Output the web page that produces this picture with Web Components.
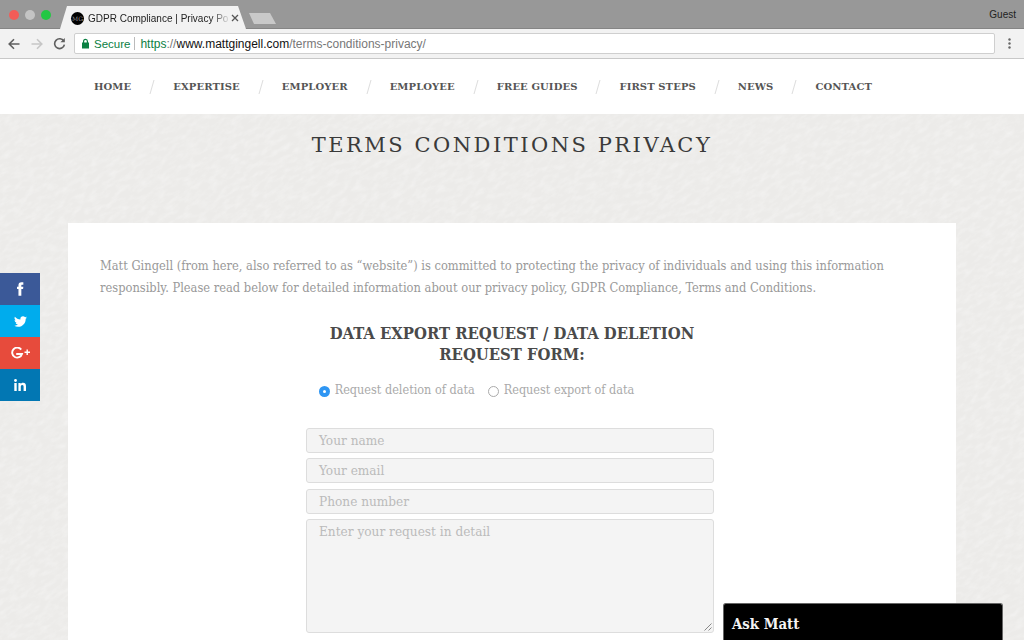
<!DOCTYPE html>
<html>
<head>
<meta charset="utf-8">
<title>GDPR Compliance | Privacy Policy</title>
<style>
  html, body { margin: 0; height: 640px; overflow: hidden; }
  body { font-family: "DejaVu Serif", serif; }
</style>
</head>
<body>
<browser-chrome></browser-chrome>
<site-nav></site-nav>
<site-page>
  <page-title>TERMS CONDITIONS PRIVACY</page-title>
  <page-card>
    <p>Matt Gingell (from here, also referred to as “website”) is committed to protecting the privacy of individuals and using this information responsibly. Please read below for detailed information about our privacy policy, GDPR Compliance, Terms and Conditions.</p>
    <request-form></request-form>
  </page-card>
  <social-bar slot="over"></social-bar>
  <ask-matt slot="over"></ask-matt>
</site-page>

<script>
// top of the window: tabs and address bar
class BrowserChrome extends HTMLElement{
  constructor(){
    super();
    this.attachShadow({mode: "open"});
  }
  connectedCallback(){
    this.shadowRoot.innerHTML = `
    <style>
      :host{
        display: block;
        font-family: "Liberation Sans", Arial, sans-serif;
      }
      .tabs{
        display: flex;
        align-items: flex-end;
        box-sizing: border-box;
        height: 29px;
        background: #989898;
        padding-left: 9px;
        border-bottom: 1px solid #858585;
      }
      .lights{
        display: flex;
        gap: 6px;
        align-self: flex-start;
        margin-top: 10px;
        width: 51px;
      }
      .lights i{
        width: 10px;
        height: 10px;
        border-radius: 50%;
      }
      .tab{
        display: flex;
        align-items: center;
        box-sizing: border-box;
        width: 186px;
        height: 23px;
        margin-bottom: -1px;
        padding: 1px 3px 0 11px;
        background: #f2f2f2;
        clip-path: polygon(0 100%, 7px 0, 178px 0, 100% 100%);
        font-size: 10px;
        color: #222;
        white-space: nowrap;
      }
      .fav{
        flex: none;
        display: grid;
        place-items: center;
        width: 13px;
        height: 13px;
        margin-right: 4px;
        border-radius: 50%;
        background: #000;
        color: #999;
        font: 6px "DejaVu Serif", serif;
      }
      .tab span.t{
        flex: 1;
        -webkit-mask-image: linear-gradient(to right, #000 86%, transparent 100%);
      }
      .tab svg{ flex: none; margin-right: 4px; }
      .newtab{
        width: 27px;
        height: 11px;
        margin: 0 0 4px 3px;
        background: #c9c9c9;
        clip-path: polygon(0 0, 21px 0, 100% 100%, 5px 100%);
      }
      .guest{
        margin-left: auto;
        align-self: center;
        padding: 0 8px 0 0;
        font-size: 10px;
        color: #222;
      }
      .bar{
        display: flex;
        align-items: center;
        box-sizing: border-box;
        height: 30px;
        padding-left: 8px;
        background: #f2f2f2;
        border-bottom: 1px solid #c8c8c8;
      }
      .bar > svg{ flex: none; }
      .omni{
        flex: 1;
        display: flex;
        align-items: center;
        box-sizing: border-box;
        height: 21px;
        margin: 0 13px 0 8px;
        padding-left: 6px;
        background: #fff;
        border: 1px solid #cfcfcf;
        border-radius: 2px;
        font-size: 12px;
        color: #777;
        white-space: nowrap;
      }
      .secure{ color: #0b8043; margin-left: 4px; font-size: 11.5px; }
      .sep{ width: 1px; height: 13px; background: #bbb; margin: 0 5px 0 4px; }
      .https{ color: #0b8043; }
      .host{ color: #111; }
      .dots{ margin-right: 13px; }
    </style>
    <div class="tabs">
      <div class="lights">
        <i style="background:#f25c58"></i><i style="background:#c4c4c4"></i><i style="background:#24c744"></i>
      </div>
      <div class="tab">
        <span class="fav">MG</span>
        <span class="t">GDPR Compliance | Privacy Po</span>
        <svg width="8" height="8" viewBox="0 0 8 8"><path d="M1 1l6 6M7 1L1 7" stroke="#555" stroke-width="1.3"/></svg>
      </div>
      <div class="newtab"></div>
      <div class="guest">Guest</div>
    </div>
    <div class="bar">
      <svg width="12" height="12" viewBox="0 0 12 12"><path d="M11.5 6H1.5M6 1.2L1.2 6 6 10.8" fill="none" stroke="#5f5f5f" stroke-width="1.6"/></svg>
      <svg style="margin-left:11px" width="12" height="12" viewBox="0 0 12 12"><path d="M.5 6h10M6 1.2L10.8 6 6 10.8" fill="none" stroke="#c6c6c6" stroke-width="1.6"/></svg>
      <svg style="margin-left:10px" width="13" height="13" viewBox="0 0 13 13"><path d="M10.8 4.2A4.9 4.9 0 1 0 11.4 7.6" fill="none" stroke="#5f5f5f" stroke-width="1.6"/><path d="M11.8 .9v4.4H7.4z" fill="#5f5f5f"/></svg>
      <div class="omni">
        <svg width="9" height="11" viewBox="0 0 9 11"><rect x="1" y="4.5" width="7" height="6" fill="#0b8043"/><path d="M2.6 5V3.2a1.9 1.9 0 0 1 3.8 0V5" fill="none" stroke="#0b8043" stroke-width="1.2"/></svg>
        <span class="secure">Secure</span>
        <span class="sep"></span>
        <span class="https">https</span>://<span class="host">www.mattgingell.com</span>/terms-conditions-privacy/
      </div>
      <svg class="dots" width="3" height="11" viewBox="0 0 3 11"><circle cx="1.5" cy="1.5" r="1.2" fill="#666"/><circle cx="1.5" cy="5.5" r="1.2" fill="#666"/><circle cx="1.5" cy="9.5" r="1.2" fill="#666"/></svg>
    </div>
    `;
  }
}
customElements.define("browser-chrome", BrowserChrome);

// white menu bar with slashes between the items
class SiteNav extends HTMLElement{
  constructor(){
    super();
    this.attachShadow({mode: "open"});
  }
  connectedCallback(){
    const items = ["HOME","EXPERTISE","EMPLOYER","EMPLOYEE","FREE GUIDES","FIRST STEPS","NEWS","CONTACT"];
    this.shadowRoot.innerHTML = `
    <style>
      :host{
        display: flex;
        align-items: center;
        box-sizing: border-box;
        height: 55px;
        padding: 0 0 0 94px;
        background: #fff;
      }
      a{
        font: bold 10px "DejaVu Serif", serif;
        letter-spacing: .1px;
        color: #555;
        white-space: nowrap;
      }
      svg{ margin: 0 18px; flex: none; }
    </style>
    ${items.map(i => `<a>${i}</a>`).join(`<svg width="6" height="16" viewBox="0 0 6 16"><path d="M5 1L1 15" stroke="#ddd"/></svg>`)}
    `;
  }
}
customElements.define("site-nav", SiteNav);

// textured area under the menu
class SitePage extends HTMLElement{
  constructor(){
    super();
    this.attachShadow({mode: "open"});
  }
  connectedCallback(){
    this.shadowRoot.innerHTML = `
    <style>
      :host{
        display: block;
        position: relative;
        height: 526px;
        overflow: hidden;
        background: #ecebe9;
      }
      .grain{
        position: absolute;
        inset: 0;
        width: 100%;
        height: 100%;
        opacity: .55;
      }
      .flow{
        position: relative;
        display: flex;
        flex-direction: column;
        align-items: center;
      }
    </style>
    <svg class="grain">
      <filter id="paper" x="0" y="0" width="100%" height="100%">
        <feTurbulence type="fractalNoise" baseFrequency="0.1 0.22" numOctaves="3" seed="7"/>
        <feColorMatrix values="0 0 0 0 1  0 0 0 0 1  0 0 0 0 1  1.2 0 0 0 -0.48"/>
      </filter>
      <rect x="-400" y="-600" width="1900" height="1700" filter="url(#paper)" transform="rotate(-32)"/>
    </svg>
    <div class="flow"><slot></slot></div>
    <slot name="over"></slot>
    `;
  }
}
customElements.define("site-page", SitePage);

class PageTitle extends HTMLElement{
  constructor(){
    super();
    this.attachShadow({mode: "open"}).innerHTML = `
    <style>
      :host{
        display: block;
        box-sizing: border-box;
        height: 109px;
        padding-top: 17px;
        font: 21px/28px "DejaVu Serif", serif;
        letter-spacing: 2.5px;
        color: #3a3a3a;
        text-align: center;
      }
    </style>
    <slot></slot>
    `;
  }
}
customElements.define("page-title", PageTitle);

class PageCard extends HTMLElement{
  constructor(){
    super();
    this.attachShadow({mode: "open"}).innerHTML = `
    <style>
      :host{
        display: block;
        box-sizing: border-box;
        width: 888px;
        height: 500px;
        padding: 32px 32px 0;
        background: #fff;
        font: 12.75px/22px "DejaVu Serif Condensed", "DejaVu Serif", serif;
        color: #999;
      }
      ::slotted(p){
        margin: 0 0 24px;
      }
    </style>
    <slot></slot>
    `;
  }
}
customElements.define("page-card", PageCard);

class FormField extends HTMLElement{
  constructor(){
    super();
    this.attachShadow({mode: "open"}).innerHTML = `
    <style>
      :host{
        display: block;
        position: relative;
        box-sizing: border-box;
        height: 25px;
        padding: 0 12px;
        background: #f4f4f4;
        border: 1px solid #ddd;
        border-radius: 3px;
        font: 13.5px/23px "DejaVu Serif Condensed", "DejaVu Serif", serif;
        color: #bbb;
      }
      :host([area]){ height: 114px; }
      svg{ display: none; position: absolute; right: 1px; bottom: 1px; }
      :host([area]) svg{ display: block; }
    </style>
    <slot></slot>
    <svg width="8" height="8" viewBox="0 0 8 8"><path d="M7.5 .5l-7 7M7.5 4.5l-3 3" stroke="#888" fill="none"/></svg>
    `;
  }
}
customElements.define("form-field", FormField);

class RadioOption extends HTMLElement{
  constructor(){
    super();
    this.attachShadow({mode: "open"}).innerHTML = `
    <style>
      :host{
        display: inline-flex;
        align-items: center;
        gap: 5px;
        font-size: 12.55px;
        color: #aaa;
      }
      i{
        box-sizing: border-box;
        width: 11px;
        height: 11px;
        margin-top: 3px;
        border-radius: 50%;
        background: #fff;
        border: 1px solid #aaa;
      }
      :host([checked]) i{
        background: #2f96f3;
        border: 0;
        display: grid;
        place-items: center;
      }
      :host([checked]) i::after{
        content: "";
        width: 3px;
        height: 3px;
        border-radius: 50%;
        background: #fff;
      }
    </style>
    <i></i><slot></slot>
    `;
  }
}
customElements.define("radio-option", RadioOption);

class RequestForm extends HTMLElement{
  constructor(){
    super();
    this.attachShadow({mode: "open"}).innerHTML = `
    <style>
      :host{
        display: flex;
        flex-direction: column;
        align-items: center;
      }
      h2{
        width: 420px;
        margin: 0 0 11px;
        font: bold 16.5px/21px "DejaVu Serif Condensed", "DejaVu Serif", serif;
        color: #4a4a4a;
        text-align: center;
      }
      .radios{
        display: flex;
        gap: 13px;
        height: 28px;
        margin: 0 71px 23.75px 0;
      }
      .fields{
        display: flex;
        flex-direction: column;
        gap: 5.5px;
        width: 408px;
        margin-right: 4px;
      }
    </style>
    <h2>DATA EXPORT REQUEST / DATA DELETION REQUEST FORM:</h2>
    <div class="radios">
      <radio-option checked>Request deletion of data</radio-option>
      <radio-option>Request export of data</radio-option>
    </div>
    <div class="fields">
      <form-field>Your name</form-field>
      <form-field>Your email</form-field>
      <form-field>Phone number</form-field>
      <form-field area>Enter your request in detail</form-field>
    </div>
    `;
  }
}
customElements.define("request-form", RequestForm);

// share buttons stuck to the left edge
class SocialBar extends HTMLElement{
  constructor(){
    super();
    this.attachShadow({mode: "open"}).innerHTML = `
    <style>
      :host{
        position: absolute;
        left: 0;
        top: 159px;
        display: flex;
        flex-direction: column;
        width: 40px;
      }
      div{
        display: grid;
        place-items: center;
        height: 32px;
      }
    </style>
    <div style="background:#3b5998"><svg width="16" height="16" viewBox="0 0 24 24"><path fill="#fff" d="M14 8.5V6.8c0-.8.2-1.2 1.3-1.2H17V2h-2.8C11 2 9.7 3.9 9.7 6.4v2.1H7.5V12h2.2v10H14V12h2.6l.4-3.5z"/></svg></div>
    <div style="background:#00aced"><svg width="13" height="13" viewBox="0 0 24 24"><path fill="#fff" d="M23.95 4.57a10 10 0 0 1-2.82.77 4.96 4.96 0 0 0 2.16-2.72c-.95.55-2 .96-3.12 1.19a4.92 4.92 0 0 0-8.38 4.48C7.69 8.1 4.07 6.13 1.64 3.16a4.82 4.82 0 0 0-.66 2.47c0 1.71.87 3.21 2.19 4.1a4.9 4.9 0 0 1-2.23-.62v.06a4.92 4.92 0 0 0 3.95 4.83 4.9 4.9 0 0 1-2.21.08 4.94 4.94 0 0 0 4.6 3.42A9.87 9.87 0 0 1 0 19.54a14 14 0 0 0 7.56 2.21c9.05 0 14-7.5 14-13.98 0-.21 0-.42-.02-.63A9.94 9.94 0 0 0 24 4.59z"/></svg></div>
    <div style="background:#e74b3c"><svg width="22" height="12" viewBox="0 0 22 12"><path d="M12.2 2.6A5 5 0 1 0 13 7H7.2" fill="none" stroke="#fff" stroke-width="1.9"/><path d="M15.5 5.2h5.5M18.2 2.5v5.5" stroke="#fff" stroke-width="1.4"/></svg></div>
    <div style="background:#0277b3"><svg width="12" height="12" viewBox="0 0 12 12"><circle cx="1.5" cy="1.5" r="1.4" fill="#fff"/><path fill="#fff" d="M.3 4h2.4v8H.3zM4.4 4h2.3v1.1c.5-.8 1.3-1.3 2.4-1.3 2.2 0 2.9 1.4 2.9 3.6V12H9.6V7.9c0-1-.2-1.9-1.3-1.9-1.2 0-1.5.9-1.5 1.9V12H4.4z"/></svg></div>
    `;
  }
}
customElements.define("social-bar", SocialBar);

// chat widget, sits over the card at the bottom of the window
class AskMatt extends HTMLElement{
  constructor(){
    super();
    this.attachShadow({mode: "open"}).innerHTML = `
    <style>
      :host{
        position: absolute;
        right: 21px;
        bottom: 0;
        box-sizing: border-box;
        width: 280px;
        height: 37px;
        padding: 8px 8px 0;
        background: #000;
        border: 1px solid #666;
        border-bottom: 0;
        border-radius: 3px 3px 0 0;
        font: bold 14.8px/24px "DejaVu Serif Condensed", "DejaVu Serif", serif;
        color: #f4f4f4;
      }
    </style>
    Ask Matt
    `;
  }
}
customElements.define("ask-matt", AskMatt);
</script>
</body>
</html>
